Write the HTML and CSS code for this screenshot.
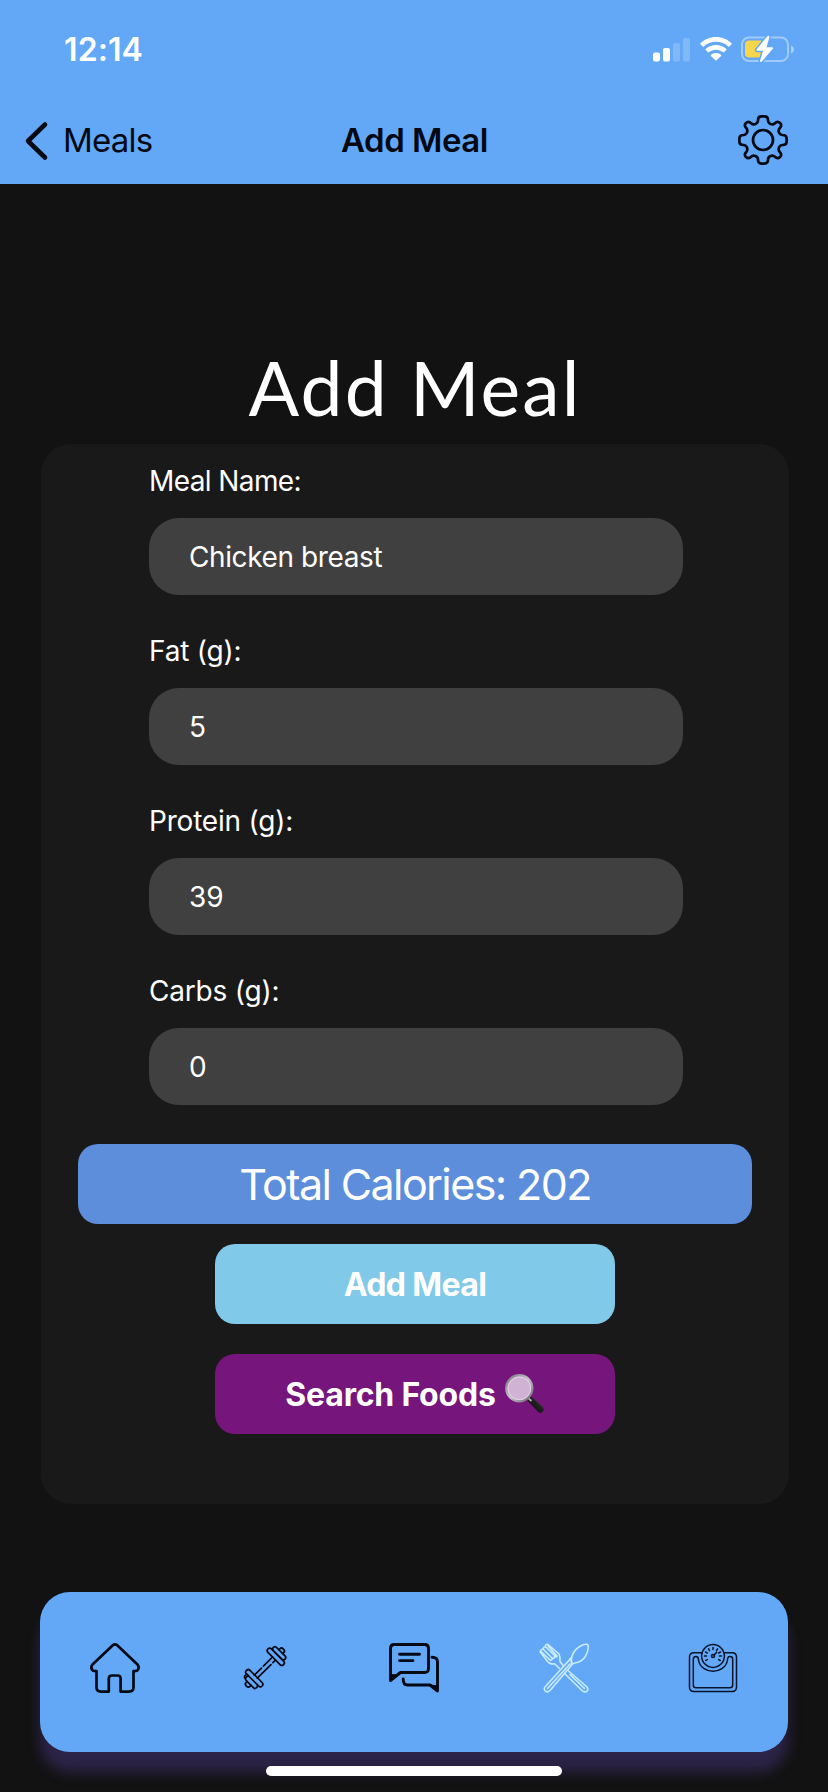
FILE: index.html
```html
<!DOCTYPE html>
<html lang="en">
<head>
<meta charset="utf-8">
<title>Add Meal</title>
<link rel="stylesheet" href="styles.css">
</head>
<body>
<div class="screen">
  <header class="header">
    <div class="status">
      <span class="clock">12:14</span>
      <div class="indicators">
        <svg class="signal" width="38" height="24" viewBox="0 0 38 24" fill="#fff">
          <rect x="0" y="14.5" width="7" height="9" rx="2"/>
          <rect x="10" y="10" width="7" height="13.5" rx="2"/>
          <rect x="20" y="5" width="7" height="18.5" rx="2" opacity=".2"/>
          <rect x="30" y="0" width="7" height="23.5" rx="2" opacity=".2"/>
        </svg>
        <svg class="wifi" width="34" height="24" viewBox="0 0 34 24" fill="#fff">
          <path d="M17 0C23.2 0 28.500 2.400 32.600 6.300Q33 6.800 32.600 7.200L30.300 9.500Q29.800 9.900 29.300 9.500C25.900 6.300 21.600 4.800 17 4.800S8.100 6.300 4.700 9.500Q4.200 9.900 3.700 9.500L1.400 7.200Q1 6.800 1.400 6.300C5.500 2.400 10.800 0 17 0Z"/>
          <path d="M17 8C21 8 24.600 9.500 27.300 12Q27.800 12.500 27.300 13L24.900 15.300Q24.500 15.700 24 15.300C22 13.600 19.600 12.700 17 12.700S12 13.600 10 15.300Q9.500 15.700 9.100 15.300L6.700 13Q6.200 12.500 6.700 12C9.400 9.500 13 8 17 8Z"/>
          <path d="M17 16C19 16 20.800 16.700 22.100 17.900Q22.600 18.400 22.100 18.900L17.600 23.300Q17 23.900 16.400 23.300L11.900 18.900Q11.400 18.400 11.900 17.900C13.200 16.700 15 16 17 16Z"/>
        </svg>
        <svg class="battery" width="53" height="27" viewBox="0 0 53 27">
          <rect x="1" y="1.500" width="46" height="23.500" rx="7" fill="none" stroke="#fff" stroke-opacity=".4" stroke-width="2"/>
          <path d="M50 9.500C54 11 54 16 50 17.500Z" fill="#fff" opacity=".45"/>
          <path d="M8 4.500H20V21.500H8Q4 21.500 4 17.500V8.500Q4 4.500 8 4.500Z" fill="#f6d74c"/>
          <path d="M26.500 0 15.500 13.500Q15 14.700 16.200 14.800H22L19 25Q19.500 26.800 20.800 25.500L32 12.600Q32.600 11.200 31 11.200H25.500L28.500 1Q28-.8 26.500 0Z" fill="#fff" stroke="#62a8f7" stroke-width="3" paint-order="stroke"/>
        </svg>
      </div>
    </div>
    <nav class="navbar">
      <a class="back">
        <svg width="23" height="38" viewBox="0 0 23 38" fill="none" stroke="#050914" stroke-width="4.600" stroke-linecap="round" stroke-linejoin="round"><path d="M20 2.500 3 19 20 35.500"/></svg>
        <span class="back-label">Meals</span>
      </a>
      <h2 class="bar-title">Add Meal</h2>
      <svg class="gear" width="50" height="50" viewBox="0 0 50 50" fill="none" stroke="#050914" stroke-width="2.700" stroke-linejoin="round">
        <circle cx="25" cy="25" r="10"/>
        <path d="M20 5.500Q20 1.400 23.500 1.400H26.500Q30 1.400 30 5.500Q30.200 8 32.500 9Q35 10 37 8.200Q39.700 5.600 42 8Q44.400 10.300 41.800 13Q40 15 41 17.500Q42 19.800 44.500 20Q48.600 20 48.600 23.500V26.500Q48.600 30 44.500 30Q42 30.200 41 32.500Q40 35 41.800 37Q44.400 39.700 42 42Q39.700 44.400 37 41.800Q35 40 32.500 41Q30.200 42 30 44.500Q30 48.600 26.500 48.600H23.500Q20 48.600 20 44.500Q19.800 42 17.500 41Q15 40 13 41.800Q10.300 44.400 8 42Q5.600 39.700 8.200 37Q10 35 9 32.500Q8 30.200 5.500 30Q1.400 30 1.400 26.500V23.500Q1.400 20 5.500 20Q8 19.800 9 17.500Q10 15 8.200 13Q5.600 10.300 8 8Q10.300 5.600 13 8.200Q15 10 17.500 9Q19.800 8 20 5.500Z"/>
      </svg>
    </nav>
  </header>

  <main class="content">
    <h1 class="title">Add Meal</h1>
    <form class="card">
      <div class="fields">
        <div class="field"><label class="label name-label">Meal Name:</label><div class="input"><span class="food">Chicken breast</span></div></div>
        <div class="field"><label class="label">Fat (g):</label><div class="input">5</div></div>
        <div class="field"><label class="label">Protein (g):</label><div class="input">39</div></div>
        <div class="field"><label class="label">Carbs (g):</label><div class="input">0</div></div>
      </div>
      <div class="total"><span>Total Calories: 202</span></div>
      <button class="button add" type="button"><span>Add Meal</span></button>
      <button class="button search" type="button">
        <span>Search Foods</span>
        <svg width="40" height="40" viewBox="0 0 40 40" role="img" aria-label="magnifying glass">
          <defs>
            <linearGradient id="rim" x1="0" y1="0" x2="1" y2="1"><stop offset="0" stop-color="#77717b"/><stop offset=".5" stop-color="#c9c4cc"/><stop offset="1" stop-color="#68606b"/></linearGradient>
            <linearGradient id="grip" x1="0" y1="1" x2="1" y2="0"><stop offset="0" stop-color="#080808"/><stop offset=".55" stop-color="#202020"/><stop offset="1" stop-color="#777"/></linearGradient>
          </defs>
          <path d="M22.500 24.500 25.500 21.800 38.500 33.300Q40 35.500 37.500 38Q35 40 33 37.800L22.800 27Z" fill="url(#grip)"/>
          <path d="M21.500 22.500 26.500 27" stroke="#aaa4ad" stroke-width="2"/>
          <circle cx="14.300" cy="14.300" r="13" fill="#d0b2d5" stroke="url(#rim)" stroke-width="2.400"/>
          <circle cx="14.300" cy="14.300" r="11.300" fill="none" stroke="#e3d5e6" stroke-width="1"/>
        </svg>
      </button>
    </form>
  </main>

  <footer class="footer">
    <nav class="tabs">
      <a class="tab"><svg width="50" height="50" viewBox="0 0 50 50" fill="none" stroke="#050914" stroke-width="2.700" stroke-linejoin="round">
        <path d="M22.800 2.300Q25 .5 27.200 2.300L47.500 21.500Q49.500 24 48 26.700Q47 28.300 43.500 28V44.500Q43.500 48.600 39 48.600H30.600V35.500Q30.600 32.500 27.500 32.500H22Q18.800 32.500 18.800 35.500V48.600H11Q6.500 48.600 6.500 44.500V28Q3 28.300 2 26.700Q.5 24 2.500 21.500Z"/>
      </svg></a>
      <a class="tab"><svg width="50" height="50" viewBox="0 0 50 50" fill="none" stroke="#050914" stroke-width="1.850" stroke-linecap="round" stroke-linejoin="round">
        <g transform="translate(25.900 24.600) rotate(-45) scale(.92)">
          <path d="M-14-2.300H-3M0-2.300H14M-14 2.300H7M10 2.300H14"/>
          <rect x="-19" y="-12" width="5.400" height="24" rx="2.700"/>
          <path d="M-19-7H-21.500Q-24.300-7-24.300-4V7Q-24.300 9-21.600 9Q-19 9-19 7"/>
          <path d="M-24.300-3H-26Q-28.500-3-28.500 0T-26 3H-24.300"/>
          <path d="M-19-9Q-23-10-23.500-7"/>
          <rect x="14" y="-12" width="5.400" height="24" rx="2.700"/>
          <rect x="19.400" y="-9" width="5" height="18" rx="2.500"/>
          <path d="M24.400-3H26Q28.500-3 28.500 0T26 3H24.400"/>
        </g>
      </svg></a>
      <a class="tab"><svg width="50" height="50" viewBox="0 0 50 50" fill="none" stroke="#050914" stroke-width="2.900" stroke-linecap="round" stroke-linejoin="round">
        <path d="M1.500 37V5.500Q1.500 1.500 5.500 1.500H35.500Q39.500 1.500 39.500 5.500V25.500Q39.500 29.500 35.500 29.500H11.500L1.500 37.500Z"/>
        <path d="M10.500 11.200H30.500M10.500 17.600H24M43 14.300Q48.500 14.300 48.500 19V48L41 42H18.500Q14.200 42 14.200 36"/>
        <path d="M42 42 48.500 43V48ZM2 32V37L7 32Z" fill="#050914" stroke-width="1"/>
      </svg></a>
      <a class="tab"><svg width="50" height="50" viewBox="0 0 50 50" fill="none" stroke="#c9edff" stroke-width="1.600" stroke-linecap="round" stroke-linejoin="round">
        <path d="M32.500 20.500C31 12 37 4 45 1.500Q49.500.3 49.300 4C49 11 45 18 38 19.500Q35 20 33.500 21L11.500 47Q9 50 6.300 48Q4 45.500 6.800 43L29 18.500"/>
        <path d="M33 20Q32 17.500 32.200 14.500L29 18.500M8.500 45.500 31 21"/>
        <path d="M8.500 1.200 20 11Q21.500 14 21 18.500L24.500 23M1 8.500 8.500 18.500Q11 21.500 16 21L20.500 25.500M8.500 1.200Q5.500 1.500 6.800 4L15.500 12.500M6.800 4Q4 3.500 4.500 6.500L13 15M4.500 6.500Q1.500 5.500 2 8.500L11 17M9 3 18 13Q17.500 15 15.500 12.500M15.500 12.500Q16 16 13 15M13 15Q13.500 18 11 17M29.500 28 48 44Q50 47 47.500 48.500Q45 49.500 43 47.500L26 31M31 31.500 45.500 45.500"/>
      </svg></a>
      <a class="tab"><svg width="50" height="50" viewBox="0 0 50 50" fill="none" stroke="#07142b" stroke-width="1.500" stroke-linecap="round" stroke-linejoin="round">
        <circle cx="25" cy="13" r="11.400"/>
        <path d="M14.200 9.800H6Q1.500 9.800 1.500 14.300V44Q1.500 48.500 6 48.500H44Q48.500 48.500 48.500 44V14.300Q48.500 9.800 44 9.800H35.800"/>
        <path d="M10.500 17Q10.500 13.600 8 13.600T5.300 16V42Q5.300 44.800 8 44.800H42Q44.700 44.800 44.700 42V16Q44.700 13.600 42 13.600T39.500 17C37 32 13 32 10.500 17Z"/>
        <circle cx="25" cy="13" r="1.500"/>
        <path d="M26 12 28.700 9.400M25 4.500V6.500M20.500 5.800 21.500 7.600M17.500 9 19.200 10M16.500 13H18.500M17.700 17.500 19.300 16.600M29.500 5.800 28.500 7.600M32.500 9 30.800 10M33.500 13H31.500M32.300 17.500 30.700 16.600"/>
      </svg></a>
    </nav>
    <div class="home-indicator"></div>
  </footer>
</div>
</body>
</html>
```
FILE: styles.css
```css
* { box-sizing: border-box; }
body { margin: 0; background: #121212; font-family: Inter, "Liberation Sans", sans-serif; }
h1, h2 { margin: 0; font-weight: 400; }
svg { display: block; overflow: visible; flex: none; }
span { white-space: nowrap; }
.screen { width: 828px; height: 1792px; display: flex; flex-direction: column; overflow: hidden; background: #121212; }
.header { height: 184px; background: #62a8f7; color: #050914; flex: none; }
.status { height: 97px; padding: 0 34px 0 64px; display: flex; justify-content: space-between; color: #fff; }
.clock { padding-top: 31px; font-size: 32px; line-height: 38px; font-weight: 600; letter-spacing: .1px; }
.indicators { display: flex; padding-top: 37px; }
.signal { margin-top: 1px; }
.wifi { margin-left: 8px; }
.battery { margin-left: 8px; margin-top: -1px; }
.navbar { height: 87px; padding: 0 40px 0 25px; display: grid; grid-template-columns: 1fr auto 1fr; align-items: center; }
.back { display: flex; align-items: center; gap: 15px; }
.back-label { font-size: 33px; letter-spacing: -.8px; margin-top: -2px; }
.bar-title { font-size: 33px; font-weight: 600; letter-spacing: -.5px; margin-left: 16px; margin-top: -2px; }
.gear { justify-self: end; margin-top: -1px; }
.content { padding: 160px 39px 0 41px; flex: 1; display: flex; flex-direction: column; align-items: center; }
.title { height: 100px; line-height: 86px; font-family: Lato, sans-serif; font-size: 75px; color: #fff; letter-spacing: 2.1px; white-space: nowrap; }
.card { width: 748px; height: 1060px; border-radius: 30px; background: #191919; display: flex; flex-direction: column; align-items: center; color: #fff; }
.fields { width: 534px; margin-left: 2px; padding-top: 19px; display: flex; flex-direction: column; gap: 34px; }
.field { display: flex; flex-direction: column; height: 136px; gap: 19px; }
.label { height: 36px; line-height: 37px; font-size: 28px; letter-spacing: -.2px; }
.name-label { letter-spacing: -.6px; }
.input { height: 77px; border-radius: 30px; background: #404040; padding-left: 40px; line-height: 79px; font-size: 28px; }
.food { letter-spacing: -.4px; }
.total { width: 674px; height: 80px; margin-top: 35px; border-radius: 20px; background: #5c8edb; display: flex; align-items: center; justify-content: center; font-size: 43px; font-weight: 400; letter-spacing: -1.6px; }
.button { width: 400px; height: 80px; padding: 0; border: 0; border-radius: 20px; color: #fff; font: 700 32px Inter, "Liberation Sans", sans-serif; letter-spacing: -.6px; display: flex; align-items: center; justify-content: center; gap: 9px; }
.add { margin-top: 20px; background: #80c9e8; }
.search { margin-top: 30px; background: #76157b; letter-spacing: -.2px; }
.footer { height: 200px; display: flex; flex-direction: column; align-items: center; flex: none; }
.tabs { width: 748px; height: 160px; border-radius: 30px; background: #62a8f7; display: grid; grid-template-columns: repeat(5, 1fr); box-shadow: 0 20px 14px rgba(127, 93, 240, .25); flex: none; }
.tab { display: flex; align-items: center; justify-content: center; padding-bottom: 8px; }
.home-indicator { width: 296px; height: 10px; margin-top: 14px; border-radius: 5px; background: #fff; position: relative; }
```
